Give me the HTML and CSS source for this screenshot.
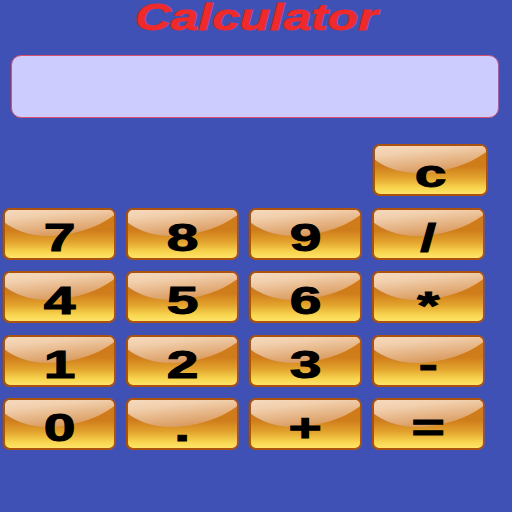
FILE: index.html
```html
<!DOCTYPE html>
<html>
<head>
<meta charset="utf-8">
<link rel="stylesheet" href="styles.css">
</head>
<body>
<div class="app">
  <h1 class="title"><span>Calculator</span></h1>
  <div class="display"></div>
  <div class="keys">
    <button class="key key-c"><span>c</span></button>
    <button class="key"><span>7</span></button>
    <button class="key"><span>8</span></button>
    <button class="key"><span>9</span></button>
    <button class="key"><span>/</span></button>
    <button class="key"><span>4</span></button>
    <button class="key"><span>5</span></button>
    <button class="key"><span>6</span></button>
    <button class="key key-star"><span>*</span></button>
    <button class="key"><span>1</span></button>
    <button class="key"><span>2</span></button>
    <button class="key"><span>3</span></button>
    <button class="key"><span>-</span></button>
    <button class="key"><span>0</span></button>
    <button class="key"><span>.</span></button>
    <button class="key"><span>+</span></button>
    <button class="key"><span>=</span></button>
  </div>
</div>
</body>
</html>
```
FILE: styles.css
```css
html, body {
  margin: 0;
  padding: 0;
  background: #3f51b5;
  width: 512px;
  height: 512px;
  overflow: hidden;
}
.app {
  display: flex;
  flex-direction: column;
}
.title {
  margin: 0;
  height: 55px;
  text-align: center;
  font-family: "Liberation Sans", Arial, sans-serif;
  font-weight: bold;
  font-style: italic;
  font-size: 37px;
  line-height: 35px;
  color: #f02a2a;
}
.title span {
  display: inline-block;
  padding: 0 4px;
  transform: scaleX(1.34);
  -webkit-text-stroke: 0.8px #f02a2a;
}
.display {
  margin: 0 13px 0 11px;
  height: 63px;
  box-sizing: border-box;
  background: #ccccff;
  border: 1px solid #d8506a;
  border-radius: 10px;
}
.keys {
  margin-top: 26px;
  padding-left: 3px;
  display: grid;
  grid-template-columns: repeat(4, 113px);
  grid-auto-rows: 52px;
  column-gap: 10px;
  row-gap: 11.5px;
}
.key {
  position: relative;
  overflow: hidden;
  margin: 0;
  padding: 8px 0 0 0;
  box-sizing: border-box;
  border: 2px solid #ab520f;
  border-radius: 7px;
  background: linear-gradient(to bottom, #cf7a1a 0%, #cf7c1b 42%, #e2a22c 66%, #f8d650 88%, #ffe468 100%);
  box-shadow: inset 0 1px 0 rgba(255,255,255,0.55);
  display: flex;
  align-items: center;
  justify-content: center;
  font-family: "Liberation Sans", Arial, sans-serif;
  font-weight: bold;
  font-size: 38px;
  line-height: 38px;
  color: #000;
}
.key::before {
  content: "";
  position: absolute;
  left: -12%;
  top: -40%;
  width: 130%;
  height: 93%;
  border-radius: 0 0 55% 45% / 0 0 100% 100%;
  background: linear-gradient(to bottom, #fae6d2 0%, #f2d0ae 50%, #d99a5e 100%);
  transform: rotate(-6deg);
}
.key span {
  position: relative;
  z-index: 1;
  display: inline-block;
  transform: scaleX(1.5);
  -webkit-text-stroke: 1px #000;
}
.key-c {
  grid-column: 4;
  margin-left: 1px;
  width: 115px;
}
.key-star {
  padding-top: 18px;
  line-height: 28px;
}
```
